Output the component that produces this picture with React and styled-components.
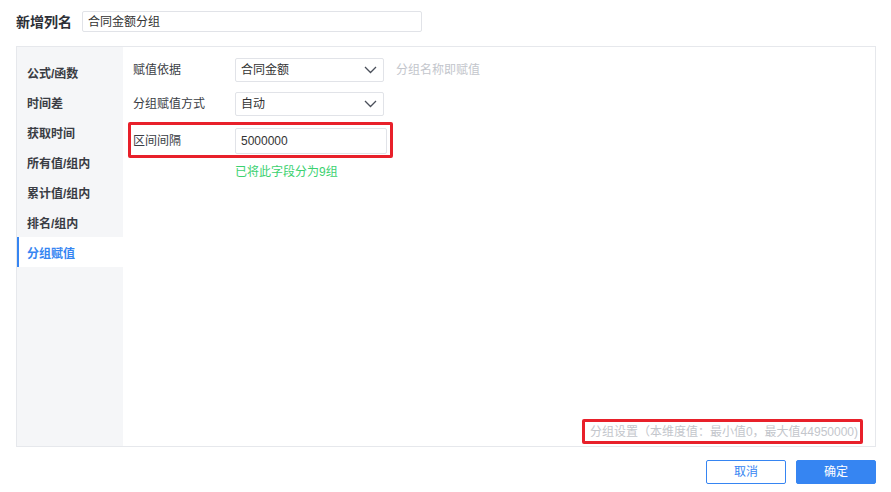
import React from "react";
import styled, { createGlobalStyle } from "styled-components";

const Global = createGlobalStyle`
  html, body { margin: 0; padding: 0; background: #fff; }
  body { font-family: "Liberation Sans", "Noto Sans CJK SC", sans-serif; color: #333; }
  * { box-sizing: border-box; }
`;

const Page = styled.div`
  width: 891px;
  height: 492px;
  padding: 11px 15px 0 16px;
  display: flex;
  flex-direction: column;
`;

const Header = styled.div`
  display: flex;
  align-items: center;
  height: 21px;
`;

const Title = styled.div`
  font-size: 14px;
  font-weight: 700;
  color: #2d3037;
  width: 66px;
  line-height: 20px;
`;

const TextInput = styled.div`
  width: ${p => p.$w}px;
  height: ${p => p.$h}px;
  border: 1px solid #e1e3e8;
  border-radius: 2px;
  font-size: 12px;
  line-height: 14px;
  color: #333;
  display: flex;
  align-items: center;
  padding-left: 5px;
  background: #fff;
`;

const Panel = styled.div`
  margin-top: 14px;
  height: 401px;
  border: 1px solid #e6e8ec;
  display: flex;
`;

const Sidebar = styled.div`
  width: 106px;
  background: #f5f6f8;
  padding-top: 10px;
  display: flex;
  flex-direction: column;
`;

const NavItem = styled.div`
  height: 30px;
  display: flex;
  align-items: center;
  padding-left: ${p => (p.$active ? 8 : 10)}px;
  font-size: 12px;
  font-weight: 600;
  color: ${p => (p.$active ? "#3685f2" : "#3a3d44")};
  background: ${p => (p.$active ? "#fff" : "transparent")};
  border-left: ${p => (p.$active ? "2px solid #3685f2" : "none")};
`;

const Content = styled.div`
  flex: 1;
  padding: 11px 12px 2px 10px;
  display: flex;
  flex-direction: column;
`;

const Row = styled.div`
  display: flex;
  align-items: center;
  margin-bottom: ${p => p.$mb || 0}px;
`;

const Label = styled.div`
  width: 102px;
  font-size: 12px;
  line-height: 14px;
  color: #3a3d44;
`;

const SelectBox = styled.div`
  width: 149px;
  height: 24px;
  border: 1px solid #e1e3e8;
  border-radius: 2px;
  display: flex;
  align-items: center;
  justify-content: space-between;
  padding: 0 6px 0 5px;
  font-size: 12px;
  line-height: 14px;
  color: #333;
`;

const Hint = styled.div`
  font-size: 12px;
  line-height: 14px;
  color: #c3c6cc;
  margin-left: 12px;
`;

const Highlight = styled.div`
  margin-left: -5px;
  width: 265px;
  border: 3px solid #e8202a;
  border-radius: 2px;
  padding: 3px 3px 1px 2px;
`;

const Success = styled.div`
  margin: 6px 0 0 102px;
  font-size: 12px;
  line-height: 16px;
  color: #3bd16f;
`;

const RangeNote = styled.div`
  margin-top: auto;
  align-self: flex-end;
  border: 3px solid #e8202a;
  border-radius: 2px;
  height: 25px;
  padding: 0 2px 0 5px;
  display: flex;
  align-items: center;
  font-size: 12px;
  line-height: 14px;
  color: #c3c6cc;
  white-space: nowrap;
`;

const Footer = styled.div`
  display: flex;
  justify-content: flex-end;
  gap: 10px;
  margin-top: 13px;
`;

const Button = styled.div`
  width: 80px;
  height: 24px;
  border-radius: 2px;
  display: flex;
  align-items: center;
  justify-content: center;
  font-size: 12px;
  line-height: 14px;
  border: 1px solid #3685f2;
  color: ${p => (p.$primary ? "#fff" : "#3685f2")};
  background: ${p => (p.$primary ? "#3685f2" : "#fff")};
`;

const Chevron = () => (
  <svg width="13" height="8" viewBox="0 0 13 8" fill="none">
    <path d="M1 1l5.5 5.5L12 1" stroke="#4a4f5a" strokeWidth="1.3" />
  </svg>
);

const navItems = ["公式/函数", "时间差", "获取时间", "所有值/组内", "累计值/组内", "排名/组内", "分组赋值"];

export default function App() {
  return (
    <>
      <Global />
      <Page>
        <Header>
          <Title>新增列名</Title>
          <TextInput $w={340} $h={21}>合同金额分组</TextInput>
        </Header>
        <Panel>
          <Sidebar>
            {navItems.map(n => (
              <NavItem key={n} $active={n === "分组赋值"}>{n}</NavItem>
            ))}
          </Sidebar>
          <Content>
            <Row $mb={10}>
              <Label>赋值依据</Label>
              <SelectBox>合同金额<Chevron /></SelectBox>
              <Hint>分组名称即赋值</Hint>
            </Row>
            <Row $mb={6}>
              <Label>分组赋值方式</Label>
              <SelectBox>自动<Chevron /></SelectBox>
            </Row>
            <Highlight>
              <Row>
                <Label>区间间隔</Label>
                <TextInput $w={152} $h={26}>5000000</TextInput>
              </Row>
            </Highlight>
            <Success>已将此字段分为9组</Success>
            <RangeNote>分组设置（本维度值：最小值0，最大值44950000)</RangeNote>
          </Content>
        </Panel>
        <Footer>
          <Button>取消</Button>
          <Button $primary>确定</Button>
        </Footer>
      </Page>
    </>
  );
}
